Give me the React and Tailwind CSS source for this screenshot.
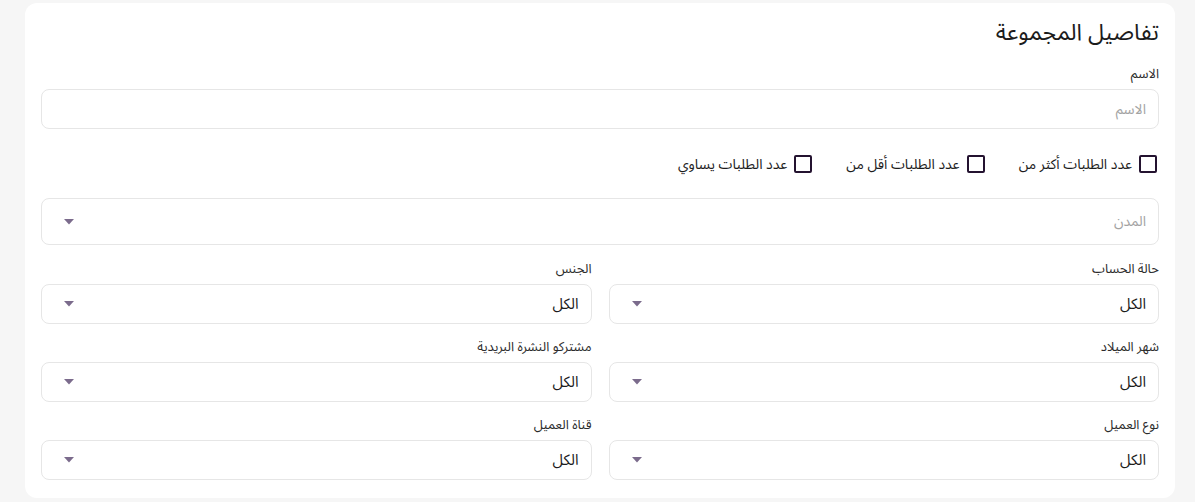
import { useState } from 'react'

const font = { fontFamily: '"Noto Sans Arabic", "DejaVu Sans", "Noto Sans", sans-serif' }

function Caret() {
  return (
    <svg width="10" height="6" viewBox="0 0 10 6" className="shrink-0">
      <path d="M0 0h10L5 5.5z" fill="#7b6b8c" />
    </svg>
  )
}

function Select({ value, placeholder, tall }) {
  return (
    <div className={`flex items-center justify-between rounded-lg border border-[#e6e6e6] bg-white pr-3 pl-[22px] ${tall ? 'h-[47px]' : 'h-10'}`}>
      {value ? (
        <span className="text-[15px] text-[#1c1c1c]">{value}</span>
      ) : (
        <span className="text-[14px] text-[#a3a3a3]">{placeholder}</span>
      )}
      <Caret />
    </div>
  )
}

function Field({ label, value }) {
  return (
    <div className="flex flex-col">
      <label className="mb-[7px] text-[13px] leading-4 text-[#2b2b2b]">{label}</label>
      <Select value={value} />
    </div>
  )
}

function Check({ label }) {
  const [checked, setChecked] = useState(false)
  return (
    <label className="flex items-center gap-[7px] cursor-pointer">
      <span
        onClick={() => setChecked(!checked)}
        className={`h-[18px] w-[18px] rounded-[2px] border-2 border-[#241330] ${checked ? 'bg-[#241330]' : 'bg-white'}`}
      />
      <span className="text-[14px] text-[#1c1c1c]">{label}</span>
    </label>
  )
}

export default function App() {
  return (
    <div dir="rtl" style={font} className="min-h-[502px] bg-[#f6f6f6] pt-[3px] pr-[20px] pl-[25px]">
      <div className="rounded-xl bg-white px-4 pt-4 pb-[18px]">
        <h2 className="text-[23px] leading-7 text-[#1c1c1c]">تفاصيل المجموعة</h2>

        <div className="mt-[19px] flex flex-col">
          <label className="mb-[7px] text-[13px] leading-4 text-[#2b2b2b]">الاسم</label>
          <input
            placeholder="الاسم"
            className="h-10 rounded-lg border border-[#e6e6e6] px-3 text-[14px] outline-none placeholder:text-[#a3a3a3]"
          />
        </div>

        <div className="mt-[23px] flex h-6 items-center gap-[34px] pr-[2px]">
          <Check label="عدد الطلبات أكثر من" />
          <Check label="عدد الطلبات أقل من" />
          <Check label="عدد الطلبات يساوي" />
        </div>

        <div className="mt-[22px]">
          <Select placeholder="المدن" tall />
        </div>

        <div className="mt-4 grid grid-cols-2 gap-x-[17px] gap-y-[15px]">
          <Field label="حالة الحساب" value="الكل" />
          <Field label="الجنس" value="الكل" />
          <Field label="شهر الميلاد" value="الكل" />
          <Field label="مشتركو النشرة البريدية" value="الكل" />
          <Field label="نوع العميل" value="الكل" />
          <Field label="قناة العميل" value="الكل" />
        </div>
      </div>
    </div>
  )
}
